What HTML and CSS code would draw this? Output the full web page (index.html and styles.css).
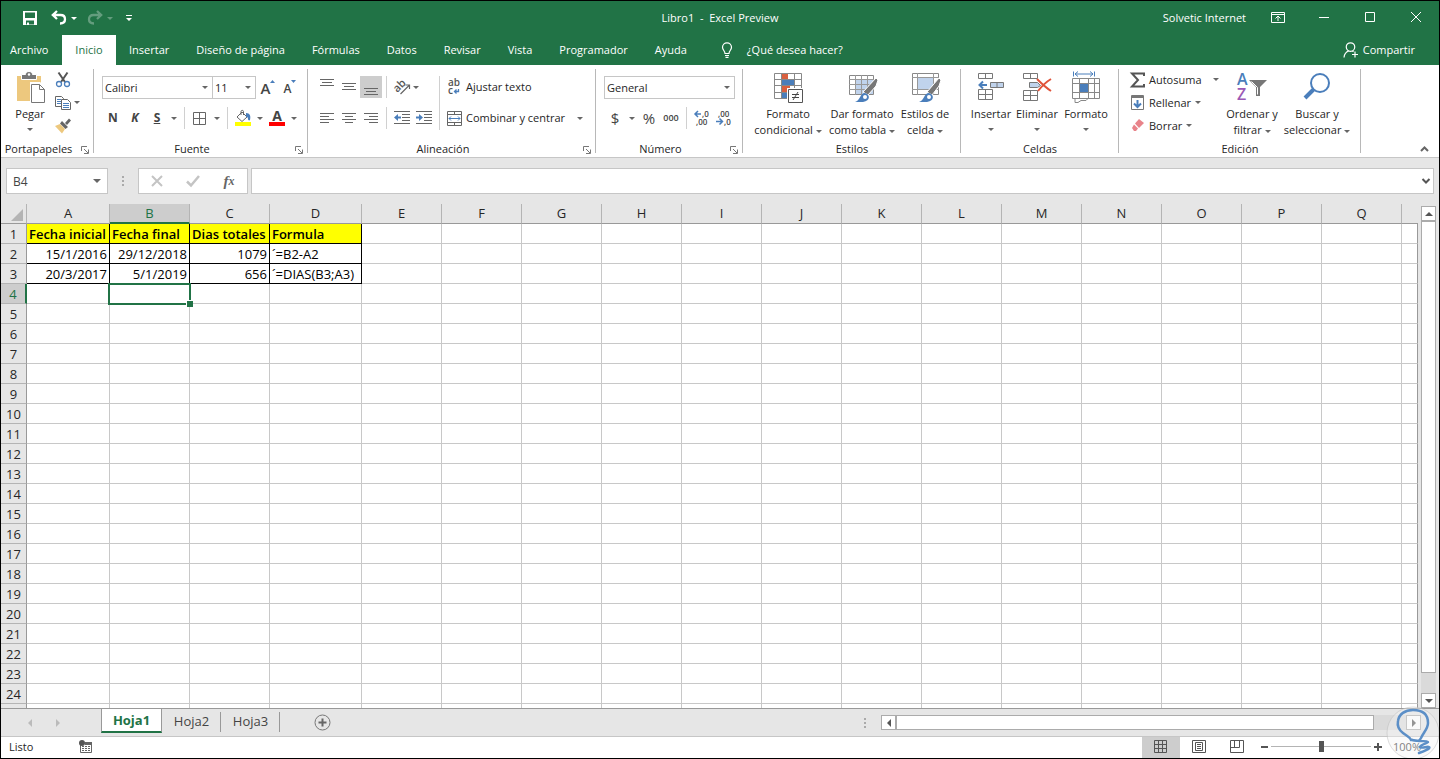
FILE: index.html
```html
<!DOCTYPE html>
<html lang="es">
<head>
    <meta charset="UTF-8">
    <meta name="viewport" content="width=device-width, initial-scale=1.0">
    <title>Libro1 - Excel Preview</title>
    <link rel="stylesheet" href="styles.css">
</head>
<body>
    <header class="title-bar">
        <div class="quick-access">
            <button type="button" aria-label="Guardar"><svg width="16" height="16" viewBox="0 0 16 16"><path fill="#fff" fill-rule="evenodd" d="M1 1h14v14H1zM3 2.500h10v5.500H3zM4 10.500h8v4h-5v-2h-2v2H4z"/></svg></button>
            <button type="button" class="undo" aria-label="Deshacer"><svg width="16" height="16" viewBox="0 0 16 16"><path fill="none" stroke="#fff" stroke-width="2.300" d="M6 1L1.800 5 6 9M2 5h7.500c3 0 4.500 1.500 4.500 4.300s-1.500 4.200-5 4.200"/></svg></button>
            <span class="caret"></span>
            <button type="button" class="redo" aria-label="Rehacer"><svg width="16" height="16" viewBox="0 0 16 16"><path fill="none" stroke="#fff" stroke-width="2.300" d="M10 1l4.200 4L10 9M14 5H6.500C3.500 5 2 6.500 2 9.300s1.500 4.200 5 4.200"/></svg><span class="caret"></span></button>
            <button type="button" class="customize" aria-label="Personalizar barra"><svg width="6" height="8" viewBox="0 0 6 8"><path fill="#fff" d="M0 1h6v1H0zM0 4h6L3 7z"/></svg></button>
        </div>
        <h1>Libro1&nbsp; -&nbsp; Excel Preview</h1>
        <div class="window-controls">
            <span class="user">Solvetic Internet</span>
            <button type="button" aria-label="Opciones de la cinta"><svg width="14" height="12" viewBox="0 0 14 12"><path fill="none" stroke="#fff" d="M.5.500h13v10H.5zM.5 2.500h13M7 9V4.500M4.500 6.500L7 4l2.500 2.500"/></svg></button>
            <button type="button" aria-label="Minimizar"><svg width="10" height="10" viewBox="0 0 10 10"><path stroke="#fff" d="M0 4.500h10"/></svg></button>
            <button type="button" aria-label="Maximizar"><svg width="10" height="10" viewBox="0 0 10 10"><path fill="none" stroke="#fff" d="M.5-.5h9v9h-9z"/></svg></button>
            <button type="button" aria-label="Cerrar"><svg width="10" height="10" viewBox="0 0 10 10"><path stroke="#fff" d="M0-1l10 10M10-1L0 9"/></svg></button>
        </div>
    </header>

    <nav class="tabs">
        <button type="button" class="file-tab">Archivo</button>
        <button type="button" class="active">Inicio</button>
        <button type="button">Insertar</button>
        <button type="button">Diseño de página</button>
        <button type="button">Fórmulas</button>
        <button type="button">Datos</button>
        <button type="button">Revisar</button>
        <button type="button">Vista</button>
        <button type="button">Programador</button>
        <button type="button">Ayuda</button>
        <button type="button" class="tell-me"><svg width="12" height="16" viewBox="0 0 12 16"><path fill="none" stroke="#fff" stroke-width="1.200" d="M4 11.500C4 9 1.500 8 1.500 5.300a4.500 4.500 0 0 1 9 0C10.500 8 8 9 8 11.500zM4 13.500h4M4.500 15.300h3"/></svg>¿Qué desea hacer?</button>
        <button type="button" class="share"><svg width="16" height="16" viewBox="0 0 16 16"><path fill="none" stroke="#fff" stroke-width="1.200" d="M7.500.800a4.200 4.200 0 1 1 0 8.500 4.200 4.200 0 0 1 0-8.500zM5.500 9C3 10 1.300 12 1 15.500M9.500 9l1 .800M12 9.500v6M9 12.500h6"/></svg>Compartir</button>
    </nav>

    <section class="ribbon">
        <div class="group clipboard">
            <div class="group-body">
                <button type="button" class="big paste">
                    <svg width="32" height="32" viewBox="0 0 32 32"><path fill="#edc87e" d="M3 5h24v25H3z"/><path fill="#777" stroke="#fff" d="M7.500 8.500v-5h4c0-4 7-4 7 0h4v5z"/><circle cx="15" cy="3.500" r="1.200" fill="#fff"/><path fill="#fff" stroke="#fff" stroke-width="3" d="M17.500 12.500h8l5 5v13h-13z"/><path fill="#fff" stroke="#777" d="M17.500 13.500h8l5 5v13h-13zM25.500 13.500v5h5"/></svg>
                    <span>Pegar</span><span class="caret"></span>
                </button>
                <div class="stack">
                    <div class="line"><button type="button" class="tool" aria-label="Cortar"><svg width="16" height="16" viewBox="0 0 16 16"><path fill="none" stroke="#555" stroke-width="2" d="M3.500.500L10 10M12.500.500L6 10"/><circle cx="4" cy="12" r="2.500" fill="#fff" stroke="#4a7ebb" stroke-width="1.300"/><circle cx="12" cy="12" r="2.500" fill="#fff" stroke="#4a7ebb" stroke-width="1.300"/></svg></button></div>
                    <div class="line"><button type="button" class="tool" aria-label="Copiar"><svg width="16" height="16" viewBox="0 0 16 16"><path fill="#fff" stroke="#666" d="M.5 1.500h6l2 2v8h-8z"/><path stroke="#4a7ebb" d="M2 4.500h4M2 6.500h4M2 8.500h4"/><path fill="#fff" stroke="#666" d="M6.500 4.500h6l3 3v7h-9z"/><path stroke="#4a7ebb" d="M8 8.500h6M8 10.500h6M8 12.500h6"/></svg></button><span class="caret"></span></div>
                    <div class="line"><button type="button" class="tool" aria-label="Copiar formato"><svg width="16" height="16" viewBox="0 0 16 16"><path fill="#edc87e" d="M0 8l5-2 5 5-3 4.500z"/><path fill="#666" d="M5 5.500L7 3l6 6-2.500 2zM10 5l4-4.500 2 2L12 7z"/></svg></button></div>
                </div>
            </div>
            <div class="group-label">Portapapeles<svg class="launcher" viewBox="0 0 8 8"><path fill="none" stroke="#777" d="M.5 5V.500H6M3 3l4 4M7.500 3.500v4H3"/></svg></div>
        </div>

        <div class="group font">
            <div class="group-body rows">
                <div class="row">
                    <label class="combo name"><select aria-label="Fuente"><option>Calibri</option></select></label>
                    <label class="combo size"><select aria-label="Tamaño de fuente"><option>11</option></select></label>
                    <button type="button" class="tool grow" aria-label="Aumentar tamaño"><span class="letter large">A</span><svg width="5" height="3" viewBox="0 0 5 3"><path fill="#4a7ebb" d="M0 3h5L2.500 0z"/></svg></button>
                    <button type="button" class="tool grow" aria-label="Disminuir tamaño"><span class="letter small">A</span><svg width="5" height="3" viewBox="0 0 5 3"><path fill="#4a7ebb" d="M0 0h5L2.500 3z"/></svg></button>
                </div>
                <div class="row">
                    <button type="button" class="tool letter">N</button>
                    <button type="button" class="tool letter italic">K</button>
                    <button type="button" class="tool letter underline">S</button>
                    <span class="drop"></span>
                    <span class="sep"></span>
                    <button type="button" class="tool" aria-label="Bordes"><svg width="14" height="13" viewBox="0 0 14 13"><path fill="none" stroke="#666" d="M.5.500h12v12H.5zM6.500.500v12M.5 6.500h12"/></svg></button>
                    <span class="drop"></span>
                    <span class="sep"></span>
                    <button type="button" class="tool" aria-label="Color de relleno"><svg width="16" height="16" viewBox="0 0 16 16"><path fill="#fff" stroke="#666" d="M2 7l5-5 5 5-5 4.500zM6 5V1.500c0-1.500 2.500-1.500 2.500 0V5"/><path fill="#4a7ebb" d="M11 3c4 0 5 3 4 7-1 1-2 0-2-1 0-2-1-2-2-2z"/><path fill="#ff0" d="M0 12h16v4H0z"/></svg></button>
                    <span class="drop"></span>
                    <button type="button" class="tool font-color" aria-label="Color de fuente"><span class="letter">A</span></button>
                    <span class="drop"></span>
                </div>
            </div>
            <div class="group-label">Fuente<svg class="launcher" viewBox="0 0 8 8"><path fill="none" stroke="#777" d="M.5 5V.500H6M3 3l4 4M7.500 3.500v4H3"/></svg></div>
        </div>

        <div class="group alignment">
            <div class="group-body">
                <div class="rows">
                    <div class="row">
                        <button type="button" class="tool" aria-label="Alinear arriba"><svg width="14" height="16" viewBox="0 0 14 16"><path stroke="#666" d="M0 .500h14M2 3.500h10M0 6.500h14"/></svg></button>
                        <button type="button" class="tool" aria-label="Alinear al medio"><svg width="14" height="16" viewBox="0 0 14 16"><path stroke="#666" d="M0 4.500h14M2 7.500h10M0 10.500h14"/></svg></button>
                        <button type="button" class="tool pressed" aria-label="Alinear abajo"><svg width="14" height="16" viewBox="0 0 14 16"><path stroke="#666" d="M0 9.500h14M2 12.500h10M0 15.500h14"/></svg></button>
                        <span class="sep"></span>
                        <button type="button" class="tool orientation" aria-label="Orientación"><svg width="17" height="16" viewBox="0 0 17 16"><text x="-1" y="10" transform="rotate(-45 6 7)">ab</text><path fill="none" stroke="#666" stroke-width="1.200" d="M6.500 15L15 6.500M11.500 6H15.500V10"/></svg></button>
                        <span class="caret"></span>
                    </div>
                    <div class="row">
                        <button type="button" class="tool" aria-label="Alinear a la izquierda"><svg width="14" height="12" viewBox="0 0 14 12"><path stroke="#666" d="M0 1.500h14M0 4.500h9M0 7.500h14M0 10.500h9"/></svg></button>
                        <button type="button" class="tool" aria-label="Centrar"><svg width="14" height="12" viewBox="0 0 14 12"><path stroke="#666" d="M0 1.500h14M3 4.500h8M0 7.500h14M3 10.500h8"/></svg></button>
                        <button type="button" class="tool" aria-label="Alinear a la derecha"><svg width="14" height="12" viewBox="0 0 14 12"><path stroke="#666" d="M0 1.500h14M5 4.500h9M0 7.500h14M5 10.500h9"/></svg></button>
                        <span class="sep"></span>
                        <button type="button" class="tool" aria-label="Disminuir sangría"><svg width="16" height="14" viewBox="0 0 16 14"><path stroke="#666" d="M0 .500h16M8 3.500h8M8 6.500h8M8 9.500h8M0 12.500h16"/><path fill="#4a7ebb" d="M0 6.500l4-3.500v2.500h3v2H4V10z"/></svg></button>
                        <button type="button" class="tool" aria-label="Aumentar sangría"><svg width="16" height="14" viewBox="0 0 16 14"><path stroke="#666" d="M0 .500h16M8 3.500h8M8 6.500h8M8 9.500h8M0 12.500h16"/><path fill="#4a7ebb" d="M7 6.500L3 3v2.500H0v2h3V10z"/></svg></button>
                    </div>
                </div>
                <span class="sep tall"></span>
                <div class="rows">
                    <div class="row"><button type="button" class="text-tool"><svg width="15" height="16" viewBox="0 0 15 16"><text x="1" y="7">ab</text><text x="1" y="15">c</text><path fill="none" stroke="#4a7ebb" stroke-width="1.300" d="M11.500 10v2.500H7.500M9.500 10.500l-2 2 2 2"/></svg>Ajustar texto</button></div>
                    <div class="row"><button type="button" class="text-tool"><svg width="15" height="15" viewBox="0 0 15 15"><path fill="none" stroke="#666" d="M.5.500h14v14H.5zM0 3.500h15M0 11.500h15M7.500.500v3M7.500 11.500v3"/><path fill="none" stroke="#4a7ebb" d="M2 7.500h11M4 5.500l-2 2 2 2M11 5.500l2 2-2 2"/></svg>Combinar y centrar</button><span class="drop merge"></span></div>
                </div>
            </div>
            <div class="group-label">Alineación<svg class="launcher" viewBox="0 0 8 8"><path fill="none" stroke="#777" d="M.5 5V.500H6M3 3l4 4M7.500 3.500v4H3"/></svg></div>
        </div>

        <div class="group number">
            <div class="group-body rows">
                <div class="row"><label class="combo format-list"><select aria-label="Formato de número"><option>General</option></select></label></div>
                <div class="row">
                    <button type="button" class="tool symbol">$</button><span class="drop"></span>
                    <button type="button" class="tool symbol">%</button>
                    <button type="button" class="tool thousands">000</button>
                    <span class="sep"></span>
                    <button type="button" class="tool decimals" aria-label="Aumentar decimales"><svg width="16" height="16" viewBox="0 0 16 16"><path fill="none" stroke="#4a7ebb" stroke-width="1.500" d="M1 4h6M4 1L1 4l3 3"/><text x="8" y="7">,0</text><text x="2" y="15">,00</text></svg></button>
                    <button type="button" class="tool decimals" aria-label="Disminuir decimales"><svg width="16" height="16" viewBox="0 0 16 16"><text x="2" y="7">,00</text><path fill="none" stroke="#4a7ebb" stroke-width="1.500" d="M0 11.500h6M3.500 8.500l3 3-3 3"/><text x="8" y="15">,0</text></svg></button>
                </div>
            </div>
            <div class="group-label">Número<svg class="launcher" viewBox="0 0 8 8"><path fill="none" stroke="#777" d="M.5 5V.500H6M3 3l4 4M7.500 3.500v4H3"/></svg></div>
        </div>

        <div class="group styles">
            <div class="group-body">
                <button type="button" class="big conditional">
                    <svg width="32" height="32" viewBox="0 0 32 32"><path fill="#fff" stroke="#888" d="M2.500 2.500h27v25h-27zM2.500 8.500h27M2.500 14.500h27M2.500 21.500h27M9.500 2.500v25M15.500 2.500v25M22.500 2.500v25"/><path fill="#d9603f" d="M10 3h6v5h-6zM10 15h8v6h-8z"/><path fill="#4a7ebb" d="M10 9h12v5H10zM10 22h6v5h-6z"/><path fill="#fff" stroke="#fff" stroke-width="3" d="M16.500 18.500h14v13h-14z"/><path fill="#fff" stroke="#555" d="M16.500 18.500h14v13h-14z"/><path stroke="#444" d="M20 23.500h7M20 26.500h7M26 21l-5 8"/></svg>
                    <span>Formato</span><span>condicional <i class="caret"></i></span>
                </button>
                <button type="button" class="big table-style">
                    <svg width="32" height="32" viewBox="0 0 32 32"><path fill="#fff" stroke="#888" d="M3.500 4.500h24v19h-24z"/><path fill="#c0d3ec" d="M10 9h17v14H10z"/><path stroke="#999" d="M3 8.500h25M3 13.500h25M3 18.500h25M9.500 4v20M15.500 4v20M21.500 4v20"/><path fill="#777" stroke="#fff" d="M17 21L30 7l2 2-2 6-8 9z"/><path fill="#4a7ebb" d="M9 31c5-1 5-9 10-9 5 1 6 8-2 9z"/><circle cx="19" cy="26" r="2" fill="#fff"/></svg>
                    <span>Dar formato</span><span>como tabla <i class="caret"></i></span>
                </button>
                <button type="button" class="big cell-style">
                    <svg width="32" height="32" viewBox="0 0 32 32"><path fill="#fff" stroke="#888" d="M3.500 2.500h26v21h-26z"/><path fill="#c0d3ec" d="M9 7h16v11H9z"/><path fill="none" stroke="#999" d="M3 6.500h27M3 18.500h27M8.500 2v22M24.500 2v22"/><path fill="#777" stroke="#fff" d="M18 21L30 7l2 2-2 6-7 9z"/><path fill="#4a7ebb" d="M10 31c5-1 5-9 10-9 5 1 6 8-2 9z"/><circle cx="20" cy="26" r="2" fill="#fff"/></svg>
                    <span>Estilos de</span><span>celda <i class="caret"></i></span>
                </button>
            </div>
            <div class="group-label">Estilos</div>
        </div>

        <div class="group cells">
            <div class="group-body">
                <button type="button" class="big insert">
                    <svg width="32" height="32" viewBox="0 0 32 32"><path fill="none" stroke="#777" d="M3.500 2.500h14v5h-14zM10.500 2.500v5M3.500 18.500h14v10h-14zM3.500 23.500h14M10.500 18.500v10"/><path fill="#c0d3ec" stroke="#777" d="M15.500 11.500h13v5h-13zM22 11.500v5"/><path fill="none" stroke="#4a7ebb" stroke-width="2" d="M12 14H5M8 10.500L4.500 14 8 17.500"/></svg>
                    <span>Insertar</span><span class="caret"></span>
                </button>
                <button type="button" class="big delete">
                    <svg width="32" height="32" viewBox="0 0 32 32"><path fill="none" stroke="#777" d="M2.500 2.500h14v5h-14zM9.500 2.500v5M2.500 19.500h14v10h-14zM2.500 24.500h14M9.500 19.500v10"/><path fill="#c0d3ec" stroke="#777" d="M8.500 11.500h8l3 3-3 2h-8z"/><path fill="none" stroke="#e0533a" stroke-width="2" d="M16 8c4 4 8 8 14 12M30 8c-5 3-9 7-13 12"/></svg>
                    <span>Eliminar</span><span class="caret"></span>
                </button>
                <button type="button" class="big format">
                    <svg width="32" height="32" viewBox="0 0 32 32"><path fill="none" stroke="#4a7ebb" d="M3.500.500v5M24.500.500v5M5 3h18M8 .500L5 3l3 2.500M20 .500L23 3l-3 2.500"/><path fill="none" stroke="#888" d="M2.500 7.500h27v20h-27zM2.500 12.500h27M2.500 21.500h27M9.500 7.500v20M18.500 7.500v20M24.500 7.500v20M5 27.500v4h3l3-2h5l2-2"/><path fill="#4a7ebb" d="M10 13h8v8h-8z"/></svg>
                    <span>Formato</span><span class="caret"></span>
                </button>
            </div>
            <div class="group-label">Celdas</div>
        </div>

        <div class="group editing">
            <div class="group-body">
                <div class="stack">
                    <div class="line"><button type="button" class="text-tool"><svg width="15" height="16" viewBox="0 0 15 16"><path fill="none" stroke="#555" stroke-width="2" d="M14 4V1.500H2L8 8l-6 6.500h12V12"/></svg>Autosuma</button><span class="drop last"></span></div>
                    <div class="line"><button type="button" class="text-tool"><svg width="15" height="16" viewBox="0 0 15 16"><path fill="#fff" stroke="#777" d="M1.500.500h12v14h-12z"/><path fill="#777" d="M2 1h12v2H2z"/><path fill="none" stroke="#4a7ebb" stroke-width="2" d="M7.500 5v7M4 8.500L7.500 12 11 8.500"/></svg>Rellenar<span class="caret"></span></button></div>
                    <div class="line"><button type="button" class="text-tool"><svg width="15" height="16" viewBox="0 0 15 16"><path fill="#e8838a" d="M9 1l5 4-5 5-4-4.500z"/><path fill="#e8838a" d="M4 6.500l4 4L6 13H4l-2-3z"/></svg>Borrar<span class="caret"></span></button></div>
                </div>
                <button type="button" class="big sort">
                    <svg width="32" height="32" viewBox="0 0 32 32"><text class="sort-a" x="1" y="14">A</text><text class="sort-z" x="1" y="29">Z</text><path fill="#777" d="M13 9h18l-7 7v9h-4v-9z"/><path fill="none" stroke="#fff" d="M15.500 10.500l6 6v7"/></svg>
                    <span>Ordenar y</span><span>filtrar <i class="caret"></i></span>
                </button>
                <button type="button" class="big search">
                    <svg width="32" height="32" viewBox="0 0 32 32"><circle cx="19" cy="12" r="9" fill="none" stroke="#4a7ebb" stroke-width="2"/><path stroke="#4a7ebb" stroke-width="4" d="M12.500 18.500L4 27"/></svg>
                    <span>Buscar y</span><span>seleccionar <i class="caret"></i></span>
                </button>
            </div>
            <div class="group-label">Edición</div>
        </div>
        <button type="button" class="collapse" aria-label="Contraer la cinta"><svg width="9" height="6" viewBox="0 0 9 6"><path fill="none" stroke="#666" stroke-width="2" d="M1 5l3.500-3.500L8 5"/></svg></button>
    </section>

    <section class="formula-bar">
        <label class="name-box"><input type="text" value="B4" aria-label="Cuadro de nombres"></label>
        <span class="dots"></span>
        <div class="formula-buttons">
            <button type="button" aria-label="Cancelar"><svg width="12" height="12" viewBox="0 0 12 12"><path stroke="#c4c4c4" stroke-width="2" d="M1 1l10 10M11 1L1 11"/></svg></button>
            <button type="button" aria-label="Introducir"><svg width="14" height="12" viewBox="0 0 14 12"><path fill="none" stroke="#c4c4c4" stroke-width="2.500" d="M1 6.500l4 4L13 1"/></svg></button>
            <button type="button" class="fx" aria-label="Insertar función">f<sub>x</sub></button>
        </div>
        <label class="formula"><input type="text" aria-label="Barra de fórmulas"><svg width="8" height="6" viewBox="0 0 8 6"><path fill="none" stroke="#555" stroke-width="2" d="M.5 1L4 4.500 7.500 1"/></svg></label>
    </section>

    <main class="workspace">
        <div class="sheet">
            <table id="grid"></table>
        </div>
        <div class="scroll vertical">
            <button type="button" aria-label="Subir"><svg width="8" height="4" viewBox="0 0 8 4"><path fill="#555" d="M0 4h8L4 0z"/></svg></button>
            <span class="thumb"></span>
            <button type="button" aria-label="Bajar"><svg width="8" height="4" viewBox="0 0 8 4"><path fill="#555" d="M0 0h8L4 4z"/></svg></button>
        </div>
    </main>

    <section class="sheet-bar">
        <div class="sheet-nav">
            <button type="button" aria-label="Hoja anterior"><svg width="4" height="8" viewBox="0 0 4 8"><path fill="#bbb" d="M4 0v8L0 4z"/></svg></button>
            <button type="button" aria-label="Hoja siguiente"><svg width="4" height="8" viewBox="0 0 4 8"><path fill="#bbb" d="M0 0v8l4-4z"/></svg></button>
        </div>
        <button type="button" class="sheet-tab active">Hoja1</button>
        <button type="button" class="sheet-tab">Hoja2</button>
        <button type="button" class="sheet-tab">Hoja3</button>
        <button type="button" class="add-sheet" aria-label="Hoja nueva"><svg width="17" height="17" viewBox="0 0 17 17"><circle cx="8.500" cy="8.500" r="7.500" fill="none" stroke="#777"/><path stroke="#666" stroke-width="2" d="M8.500 4.500v8M4.500 8.500h8"/></svg></button>
        <span class="dots"></span>
        <div class="scroll horizontal">
            <button type="button" aria-label="Izquierda"><svg width="4" height="8" viewBox="0 0 4 8"><path fill="#555" d="M4 0v8L0 4z"/></svg></button>
            <span class="thumb"></span>
            <button type="button" aria-label="Derecha"><svg width="4" height="8" viewBox="0 0 4 8"><path fill="#555" d="M0 0v8l4-4z"/></svg></button>
        </div>
    </section>

    <footer class="status-bar">
        <span class="state">Listo</span>
        <svg width="13" height="13" viewBox="0 0 13 13"><path fill="none" stroke="#666" d="M1.500 5v7.500h11v-10H6"/><path fill="#666" d="M6 2h7v3H6z"/><circle cx="3" cy="3" r="3" fill="#555"/><path stroke="#666" stroke-dasharray="2 1" d="M3 6.500h9M3 8.500h9M3 10.500h9"/></svg>
        <div class="views">
            <button type="button" class="active" aria-label="Normal"><svg width="14" height="13" viewBox="0 0 14 13"><path fill="none" stroke="#555" d="M.5.500h12v12H.5zM4.500.500v12M8.500.500v12M.5 4.500h12M.5 8.500h12"/></svg></button>
            <button type="button" aria-label="Diseño de página"><svg width="14" height="13" viewBox="0 0 14 13"><path fill="none" stroke="#555" d="M.5.500h13v12H.5zM3.500 2.500h7v8h-7zM5 4.500h4M5 6.500h4M5 8.500h4"/></svg></button>
            <button type="button" aria-label="Vista previa de salto de página"><svg width="14" height="13" viewBox="0 0 14 13"><path fill="none" stroke="#555" d="M.5.500h13v12H.5zM4.500.500v7M9.500.500v7M.5 7.500h9"/></svg></button>
        </div>
        <div class="zoom">
            <button type="button" aria-label="Alejar"><svg width="7" height="8" viewBox="0 0 7 8"><path fill="#555" d="M0 3h7v2H0z"/></svg></button>
            <input type="range" min="0" max="200" value="100" aria-label="Zoom">
            <button type="button" aria-label="Acercar"><svg width="8" height="8" viewBox="0 0 8 8"><path fill="#555" d="M0 3h3V0h2v3h3v2H5v3H3V5H0z"/></svg></button>
            <span class="percent">100%</span>
        </div>
    </footer>

    <svg class="badge" width="54" height="54" viewBox="0 0 54 54"><circle cx="27" cy="27" r="26" fill="#f2f2f2" fill-opacity=".4" stroke="#bbb" stroke-opacity=".5"/><path fill="none" stroke="#5c8fc7" stroke-width="2.500" stroke-linecap="round" stroke-linejoin="round" d="M25 34c-1-3-4-4-8-7-4-3-6-7-5-12C13 8 19 4 27 4c9 0 15 4 15 13 0 6-5 10-7 15-2 4-3 3-9 2l7 1c4 0 9 0 9 1s-8 3-8 5c2 2 7-1 9 0s-4 4-10 6"/></svg>

    <script src="grid.js"></script>
</body>
</html>
```
FILE: styles.css
```css
* {
    box-sizing: border-box;
}
body {
    margin: 0;
    height: 100vh;
    border: 1px solid #000;
    display: flex;
    flex-direction: column;
    overflow: hidden;
    position: relative;
    background-color: #e6e6e6;
    color: #262626;
    font-family: "Open Sans", "Noto Sans", sans-serif;
    font-size: 11px;
    line-height: 16px;
}
button,
input,
select {
    font: inherit;
    color: inherit;
    background: none;
    border: 0;
    margin: 0;
    padding: 0;
    white-space: nowrap;
}
svg {
    display: block;
    flex: none;
    overflow: visible;
}
.caret {
    display: inline-block;
    flex: none;
    border: 3px solid transparent;
    border-top-color: #666;
    border-bottom: 0;
    vertical-align: middle;
}

/* Title bar */
.title-bar {
    height: 34px;
    flex: none;
    display: grid;
    grid-template-columns: 1fr auto 1fr;
    align-items: center;
    background-color: #217346;
    color: #fff;
}
.title-bar h1 {
    margin: 0;
    font-size: 11px;
    font-weight: normal;
}
.title-bar .caret {
    border-top-color: #fff;
}
.quick-access {
    display: flex;
    align-items: center;
    padding-left: 21px;
}
.undo {
    margin: 0 4px 0 13px;
}
.redo {
    display: flex;
    align-items: center;
    gap: 4px;
    margin-left: 10px;
    opacity: 0.3;
}
.customize {
    margin-left: 13px;
}
.window-controls {
    display: flex;
    align-items: center;
    justify-content: flex-end;
}
.window-controls button {
    width: 46px;
    height: 34px;
    display: flex;
    align-items: center;
    justify-content: center;
}
.user {
    margin-right: 9px;
}

/* Ribbon tabs */
.tabs {
    height: 30px;
    flex: none;
    display: flex;
    background-color: #217346;
    color: #fff;
}
.tabs button {
    padding: 0 14px 0 13px;
}
.tabs .file-tab {
    width: 61px;
    padding: 0 0 0 9px;
    text-align: left;
}
.tabs .active {
    width: 54px;
    padding: 0;
    background-color: #fff;
    color: #217346;
}
.tabs .tell-me,
.tabs .share {
    display: flex;
    align-items: center;
    gap: 14px;
}
.tabs .tell-me {
    padding-left: 20px;
}
.tabs .share {
    gap: 4px;
    margin-left: auto;
    padding-right: 24px;
}

/* Ribbon */
.ribbon {
    height: 93px;
    flex: none;
    display: flex;
    background-color: #fff;
    border-bottom: 1px solid #c6c6c6;
}
.group {
    flex: none;
    position: relative;
    padding-left: 8px;
}
.group::after {
    content: "";
    position: absolute;
    right: 0;
    top: 4px;
    bottom: 4px;
    border-right: 1px solid #b8b8b8;
}
.group-body {
    height: 76px;
    display: flex;
}
.group-label {
    margin-left: -8px;
    position: relative;
    text-align: center;
}
.launcher {
    position: absolute;
    right: 5px;
    top: 5px;
    width: 8px;
    height: 8px;
}
.clipboard { width: 93px; }
.font { width: 214px; }
.alignment { width: 288px; }
.number { width: 147px; }
.styles { width: 218px; }
.cells { width: 158px; }
.editing { width: 242px; }
.clipboard .group-label,
.font .group-label,
.alignment .group-label,
.number .group-label {
    padding-right: 18px;
}

.rows {
    display: flex;
    flex-direction: column;
    gap: 9px;
    padding-top: 11px;
}
.row {
    height: 22px;
    display: flex;
    align-items: center;
}
.stack {
    padding-top: 3px;
}
.line {
    height: 23px;
    display: flex;
    align-items: center;
}
.tool {
    width: 22px;
    height: 22px;
    display: flex;
    align-items: center;
    justify-content: center;
}
.pressed {
    background-color: #cdcdcd;
}
.drop {
    width: 12px;
    display: flex;
    justify-content: center;
}
.drop::before {
    content: "";
    border: 3px solid transparent;
    border-top-color: #666;
    border-bottom: 0;
}
.drop.last {
    margin-left: auto;
    margin-right: 2px;
}
.drop.merge {
    margin-left: 9px;
}
.sep {
    width: 1px;
    height: 22px;
    margin: 0 4px;
    background-color: #d0d0d0;
}
.sep.tall {
    height: 54px;
    margin-top: 11px;
}
.text-tool {
    display: flex;
    align-items: center;
    gap: 4px;
    padding-left: 3px;
}
.big {
    display: flex;
    flex-direction: column;
    align-items: center;
    padding-top: 6px;
}
.big svg {
    margin-bottom: 3px;
}
.big > .caret {
    margin-top: 6px;
}
.paste {
    width: 44px;
    margin-left: -1px;
}
.conditional,
.table-style { width: 74px; }
.cell-style { width: 52px; }
.insert { width: 44px; }
.delete { width: 48px; }
.format { width: 50px; }
.sort { width: 56px; }
.search { width: 74px; }
.editing .stack { width: 97px; }

.letter {
    font-size: 12px;
    font-weight: bold;
    color: #444;
}
.italic {
    font-style: italic;
}
.underline {
    text-decoration: underline;
}
.grow {
    align-items: flex-start;
}
.letter.large {
    font-size: 15px;
    font-weight: 600;
    line-height: 24px;
}
.letter.small {
    font-weight: 600;
    line-height: 26px;
}
.grow svg {
    margin-top: 4px;
}
.font-color .letter {
    width: 16px;
    height: 16px;
    font-size: 14px;
    line-height: 12px;
    border-bottom: 4px solid #f00;
}
.symbol {
    font-size: 15px;
    color: #444;
}
.thousands {
    font-size: 9px;
    font-weight: 600;
    color: #444;
}
.orientation text,
.text-tool text {
    font-size: 10px;
    font-weight: 600;
    fill: #555;
}
.orientation text {
    font-size: 11px;
}
.decimals text {
    font-size: 8px;
    font-weight: 600;
    fill: #444;
}
.sort-a,
.sort-z {
    font-size: 16px;
    font-weight: 600;
    fill: #4a7ebb;
}
.sort-z {
    fill: #9b59b6;
}
.combo {
    height: 23px;
    display: flex;
    position: relative;
    border: 1px solid #c6c6c6;
}
.combo select {
    width: 100%;
    padding: 1px 2px 0;
    appearance: none;
}
.combo::after,
.name-box::after {
    content: "";
    position: absolute;
    right: 4px;
    top: 9px;
    border: 3px solid transparent;
    border-top-color: #666;
    border-bottom: 0;
}
.combo.name { width: 111px; }
.combo.size {
    width: 43px;
    margin-right: 1px;
    border-left: 0;
}
.combo.format-list { width: 131px; }
.collapse {
    margin: auto 10px 5px auto;
}

/* Formula bar */
.formula-bar {
    height: 46px;
    flex: none;
    display: flex;
    align-items: center;
    padding: 0 5px;
}
.name-box,
.formula-buttons,
.formula {
    height: 26px;
    display: flex;
    align-items: center;
    position: relative;
    background-color: #fff;
    border: 1px solid #c6c6c6;
}
.name-box {
    width: 102px;
}
.name-box input {
    width: 80px;
    padding: 1px 0 0 6px;
    font-size: 12px;
    color: #444;
}
.name-box::after {
    right: 6px;
    top: 10px;
    border-width: 4px 4px 0;
}
.dots {
    width: 2px;
    height: 10px;
    background: repeating-linear-gradient(#aaa 0 2px, transparent 2px 4px);
}
.formula-bar .dots {
    margin: 0 14px;
}
.formula-buttons {
    width: 110px;
    margin-right: 3px;
}
.formula-buttons button {
    width: 36px;
    display: flex;
    justify-content: center;
}
.formula-buttons .fx {
    font-family: "Liberation Serif", serif;
    font-size: 15px;
    font-style: italic;
    font-weight: bold;
    color: #666;
}
.fx sub {
    font-size: 12px;
}
.formula {
    flex: 1;
    padding-right: 3px;
}
.formula input {
    flex: 1;
}

/* Sheet */
.workspace {
    flex: 1;
    min-height: 0;
    display: flex;
}
.sheet {
    flex: 1;
    min-width: 0;
    overflow: hidden;
}
#grid {
    width: 100%;
    table-layout: fixed;
    border-collapse: separate;
    border-spacing: 0;
    font-size: 13px;
    color: #000;
}
#grid tr {
    height: 20px;
}
#grid th,
#grid td {
    height: 20px;
    padding: 2px 2px 0;
    line-height: 17px;
    white-space: nowrap;
    border-right: 1px solid #c8c8c8;
    border-bottom: 1px solid #c8c8c8;
}
#grid th {
    padding: 2px 0 0;
    font-weight: normal;
    color: #262626;
    background-color: #e6e6e6;
    border-color: #b4b4b4;
}
#grid td {
    background-color: #fff;
}
#grid thead th {
    padding: 0;
    line-height: 19px;
    border-bottom-color: #999;
}
#grid thead th:last-child {
    border-right: 0;
}
#grid tbody th,
#grid tbody td:last-child {
    border-right-color: #999;
}
#grid thead .corner {
    padding: 0 3px 2px 0;
    line-height: 17px;
    vertical-align: bottom;
}
.corner svg {
    margin-left: auto;
}
#grid th.current {
    background-color: #cdcdcd;
    color: #217346;
}
#grid thead th.current {
    border-bottom: 2px solid #217346;
    line-height: 18px;
}
#grid tbody th.current {
    border-right: 2px solid #217346;
}
#grid .data {
    border-color: #000;
}
#grid .heading {
    background-color: #ff0;
    font-weight: 600;
}
#grid .value {
    text-align: right;
}
#grid .selected {
    position: relative;
}
.selected::before {
    content: "";
    position: absolute;
    inset: -1px -2px -2px -2px;
    border: 2px solid #217346;
}
.selected::after {
    content: "";
    position: absolute;
    right: -4px;
    bottom: -4px;
    width: 6px;
    height: 6px;
    background-color: #217346;
    border: 1px solid #fff;
    border-width: 1px 0 0 1px;
}

/* Scroll bars */
.scroll {
    display: flex;
    background-color: #dadada;
}
.scroll button,
.thumb {
    background-color: #fff;
    border: 1px solid #ababab;
}
.scroll button {
    width: 15px;
    height: 15px;
    flex: none;
    display: flex;
    align-items: center;
    justify-content: center;
}
.vertical {
    flex-direction: column;
    justify-content: space-between;
    width: 15px;
    margin: 2px 3px 0 3px;
}
.vertical .thumb {
    flex: 1;
    margin-bottom: 20px;
}
.horizontal {
    width: 540px;
}
.horizontal .thumb {
    flex: 1;
    margin-right: 32px;
}

/* Sheet tabs */
.sheet-bar {
    height: 29px;
    flex: none;
    display: flex;
    align-items: center;
    padding-right: 18px;
    border-top: 1px solid #999;
    border-bottom: 1px solid #c6c6c6;
}
.sheet-nav {
    width: 100px;
    display: flex;
    gap: 24px;
    padding-left: 27px;
}
.sheet-tab {
    align-self: flex-start;
    height: 24px;
    width: 59px;
    font-size: 13px;
    color: #444;
    position: relative;
}
.sheet-tab:not(.active)::after {
    content: "";
    position: absolute;
    right: 0;
    top: 3px;
    height: 20px;
    border-right: 1px solid #999;
}
.sheet-tab.active {
    width: 61px;
    background-color: #fff;
    border: 1px solid #999;
    border-top: 0;
    border-bottom: 2px solid #217346;
    font-weight: bold;
    color: #217346;
}
.add-sheet {
    margin-left: 34px;
}
.sheet-bar .dots {
    margin: 0 15px 0 auto;
}

/* Status bar */
.status-bar {
    height: 21px;
    flex: none;
    display: flex;
    align-items: center;
    padding: 0 18px 0 8px;
    background-color: #fff;
}
.status-bar > svg,
.state,
.zoom,
.views svg {
    margin-bottom: 2px;
}
.state {
    width: 70px;
}
.views {
    display: flex;
    height: 100%;
    margin-left: auto;
}
.views button {
    width: 38px;
    display: flex;
    align-items: center;
    justify-content: center;
}
.views .active {
    background-color: #cdcdcd;
}
.zoom {
    display: flex;
    align-items: center;
    padding-left: 5px;
}
.zoom input {
    width: 100px;
    height: 11px;
    margin: 0 3px;
    appearance: none;
    background: linear-gradient(#b4b4b4, #b4b4b4) center / 100% 1px no-repeat;
}
.zoom input::-webkit-slider-thumb {
    appearance: none;
    width: 5px;
    height: 11px;
    background-color: #555;
}
.percent {
    margin-left: 11px;
    color: #333;
}
.badge {
    position: absolute;
    right: -1px;
    bottom: -2px;
}
```
FILE: grid.js
```js
// Column widths in pixels, borders included
const columnWidths = [83, 80, 80, 92];
const defaultWidth = 80;
const headerWidth = 26;
const rowHeight = 20;

const cells = [
    ['Fecha inicial', 'Fecha final', 'Dias totales', 'Formula'],
    ['15/1/2016', '29/12/2018', '1079', '´=B2-A2'],
    ['20/3/2017', '5/1/2019', '656', '´=DIAS(B3;A3)']
];
const current = { row: 3, column: 1 };

function drawGrid() {
    const sheet = document.querySelector('.sheet');
    const used = headerWidth + columnWidths.reduce((a, b) => a + b, 0);
    const columns = Math.min(26, columnWidths.length + Math.floor((sheet.clientWidth - used) / defaultWidth));
    const rows = Math.floor((sheet.clientHeight - rowHeight) / rowHeight);

    let html = `<colgroup><col style="width:${headerWidth}px">`;
    for (let c = 0; c < columns; c++) {
        html += `<col style="width:${columnWidths[c] || defaultWidth}px">`;
    }
    html += '<col></colgroup><thead><tr><th class="corner"><svg width="12" height="12" viewBox="0 0 12 12"><path fill="#b4b4b4" d="M12 0v12H0z"/></svg></th>';
    for (let c = 0; c < columns; c++) {
        html += `<th${c === current.column ? ' class="current"' : ''}>${String.fromCharCode(65 + c)}</th>`;
    }
    html += '<th></th></tr></thead><tbody>';

    // One extra row and column without labels fill what is left of the window
    for (let r = 0; r <= rows; r++) {
        html += `<tr><th${r === current.row ? ' class="current"' : ''}>${r < rows ? r + 1 : ''}</th>`;
        for (let c = 0; c <= columns; c++) {
            const text = cells[r] && cells[r][c];
            let name = '';
            if (text) {
                name = 'data' + (r === 0 ? ' heading' : c < 3 ? ' value' : '');
            } else if (r === current.row && c === current.column) {
                name = 'selected';
            }
            html += `<td${name ? ` class="${name}"` : ''}>${text || ''}</td>`;
        }
        html += '</tr>';
    }
    document.getElementById('grid').innerHTML = html + '</tbody>';
}

drawGrid();
window.addEventListener('resize', drawGrid);
```
